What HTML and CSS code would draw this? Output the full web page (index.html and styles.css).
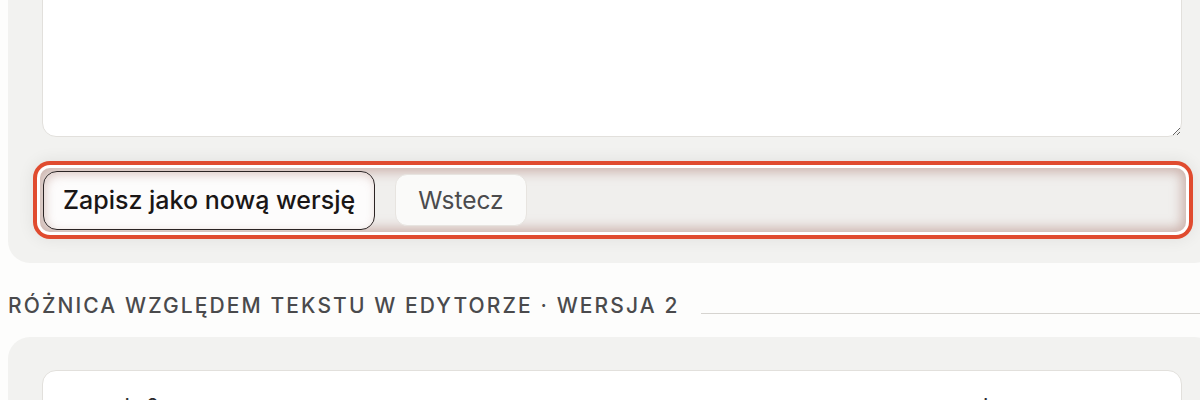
FILE: index.html
```html
<!DOCTYPE html>
<html lang="pl">
<head>
<meta charset="utf-8">
<title>Edytor wersji</title>
<link rel="stylesheet" href="styles.css">
</head>
<body>
<div class="page">
  <section class="card card-editor">
    <textarea class="editor" aria-label="Tekst"></textarea>
    <div class="actions">
      <button class="btn btn-primary" type="button">Zapisz jako nową wersję</button>
      <button class="btn btn-secondary" type="button">Wstecz</button>
    </div>
  </section>

  <div class="section-head">
    <h2 class="section-title">Różnica względem tekstu w edytorze · wersja 2</h2>
    <span class="section-rule"></span>
  </div>

  <section class="card card-diff">
    <div class="diff-box">
      <div class="diff-head">
        <span class="diff-label">wersja 2</span>
        <span class="diff-label diff-right">zmiany</span>
      </div>
    </div>
  </section>
</div>
</body>
</html>
```

FILE: styles.css
```css
html, body {
  margin: 0;
  padding: 0;
  overflow: hidden;
  background: #fdfdfc;
}

body {
  font-family: Inter, "Noto Sans", "Liberation Sans", sans-serif;
  color: #1c1a1a;
}

.page {
  width: 1208px;
  padding-left: 8px;
  margin-top: -50px;
}

.card {
  background: #f2f2f0;
  border-radius: 22px;
  padding: 34px;
}

.card-editor {
  padding-bottom: 31px;
}

.editor {
  display: block;
  box-sizing: border-box;
  width: 100%;
  height: 153px;
  margin: 0;
  background: #ffffff;
  border: 1px solid #e2e0dc;
  border-radius: 14px;
  resize: vertical;
  font-family: inherit;
}

.actions {
  display: flex;
  align-items: center;
  gap: 20px;
  margin: 31px -4px 0 -2px;
  height: 64px;
  padding: 0 3px;
  border-radius: 10px;
  background: #f0efed;
  box-shadow:
    inset 0 0 12px 4px rgba(175, 130, 120, 0.55),
    0 0 0 3px #ffffff,
    0 0 0 7px #e04b2f,
    0 0 16px 8px rgba(0, 0, 0, 0.07);
}

.btn {
  font-family: inherit;
  line-height: 30px;
  cursor: pointer;
  box-sizing: border-box;
}

.btn-primary {
  height: 59px;
  padding: 0 19px;
  font-size: 25px;
  font-weight: 500;
  color: #1a1616;
  background: #fdfcfc;
  border: 1.5px solid #2b2424;
  border-radius: 14px;
  box-shadow: inset 2px 3px 10px rgba(170, 120, 110, 0.35);
}

.btn-secondary {
  height: 52px;
  padding: 0 22px;
  font-size: 24.5px;
  font-weight: 400;
  color: #4b4b4d;
  background: #fafaf9;
  border: 1px solid #e7e4e0;
  border-radius: 12px;
}

.section-head {
  display: flex;
  align-items: flex-end;
  gap: 22px;
  margin-top: 31px;
}

.section-title {
  margin: 0;
  font-size: 21px;
  line-height: 24px;
  font-weight: 500;
  letter-spacing: 2.1px;
  text-transform: uppercase;
  color: #4a4a4c;
  white-space: nowrap;
}

.section-rule {
  flex: 1;
  height: 1px;
  margin-bottom: 4px;
  background: #d6d4d0;
}

.card-diff {
  margin-top: 19px;
  padding-top: 33px;
  height: 200px;
}

.diff-box {
  background: #ffffff;
  border: 1px solid #e2e0dc;
  border-radius: 14px;
  padding: 23px 24px 22px 36px;
  height: 200px;
}

.diff-head {
  display: flex;
  justify-content: space-between;
  padding-right: 135px;
}

.diff-label {
  font-size: 20px;
  line-height: 24px;
  color: #2a2a2c;
}
```
